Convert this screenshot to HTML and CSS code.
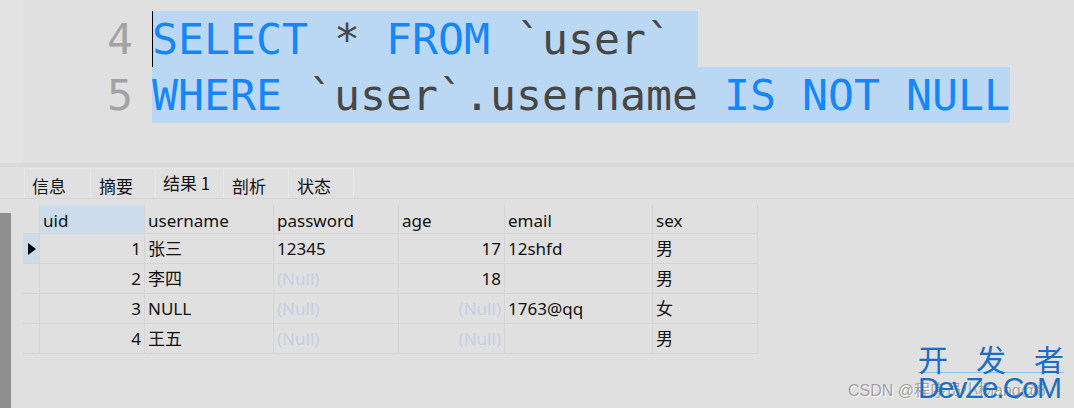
FILE: index.html
```html
<!DOCTYPE html>
<html lang="zh-CN">
<head>
    <meta charset="UTF-8">
    <title>查询</title>
    <link rel="stylesheet" href="styles.css">
</head>
<body>

<div class="editor">
    <div class="line">
        <span class="ln">4</span>
        <span class="code sel cursor"><span class="kw">SELECT</span> * <span class="kw">FROM</span> `user` </span>
    </div>
    <div class="line">
        <span class="ln">5</span>
        <span class="code sel"><span class="kw">WHERE</span> `user`.username <span class="kw">IS NOT NULL</span></span>
    </div>
</div>

<div class="split"></div>

<div class="tabs">
    <div class="tab">信息</div>
    <div class="tab">摘要</div>
    <div class="tab active">结果 1</div>
    <div class="tab">剖析</div>
    <div class="tab">状态</div>
</div>

<div class="results">
    <div class="scrollbar"></div>
    <div class="grid">
        <div class="row head">
            <div class="ind"></div>
            <div class="c uid picked">uid</div>
            <div class="c name">username</div>
            <div class="c pwd">password</div>
            <div class="c age">age</div>
            <div class="c mail">email</div>
            <div class="c sex">sex</div>
        </div>
        <div class="row">
            <div class="ind current"><span class="arrow"></span></div>
            <div class="c uid num">1</div>
            <div class="c name">张三</div>
            <div class="c pwd">12345</div>
            <div class="c age num">17</div>
            <div class="c mail">12shfd</div>
            <div class="c sex">男</div>
        </div>
        <div class="row">
            <div class="ind"></div>
            <div class="c uid num">2</div>
            <div class="c name">李四</div>
            <div class="c pwd null">(Null)</div>
            <div class="c age num">18</div>
            <div class="c mail"></div>
            <div class="c sex">男</div>
        </div>
        <div class="row">
            <div class="ind"></div>
            <div class="c uid num">3</div>
            <div class="c name">NULL</div>
            <div class="c pwd null">(Null)</div>
            <div class="c age num null">(Null)</div>
            <div class="c mail">1763@qq</div>
            <div class="c sex">女</div>
        </div>
        <div class="row">
            <div class="ind"></div>
            <div class="c uid num">4</div>
            <div class="c name">王五</div>
            <div class="c pwd null">(Null)</div>
            <div class="c age num null">(Null)</div>
            <div class="c mail"></div>
            <div class="c sex">男</div>
        </div>
    </div>
</div>

<!-- watermark -->
<div class="mark">
    <span class="csdn">CSDN @程序员小杨ang@8</span>
    <div class="dev">
        <div class="dev-cn">开<span class="gap"></span>发<span class="gap"></span>者</div>
        <div class="dev-en">DevZe.CoM</div>
    </div>
</div>

</body>
</html>
```

FILE: styles.css
```css
body {
    margin: 0;
    padding: 0;
    width: 1074px;
    height: 408px;
    overflow: hidden;
    background-color: #e0e0e0;
    font-family: "Noto Sans", "Noto Sans CJK SC", sans-serif;
    color: #111;
    position: relative;
}
.editor {
    height: 152px;
    padding-top: 11px;
    font-family: "DejaVu Sans Mono", monospace;
    font-size: 43.2px;
    background: linear-gradient(to right, #e3e3e3 22px, #e0e0e0 22px);
}
.line {
    display: flex;
    height: 56px;
    line-height: 56px;
}
.ln {
    width: 133px;
    margin-right: 19px;
    text-align: right;
    color: #a3a3a3;
}
.code {
    white-space: pre;
    color: #474747;
}
.sel {
    background-color: #bad8f3;
}
.cursor {
    box-shadow: inset 1px 0 0 #000;
}
.kw {
    color: #1586fb;
}
.split {
    height: 4px;
    background-color: #d9d9d9;
}
.tabs {
    display: flex;
    height: 30px;
    margin-top: 1px;
    padding-left: 24px;
    border-bottom: 1px solid #d6d6d6;
    font-family: "Noto Sans CJK SC", sans-serif;
    font-size: 17px;
}
.tab {
    width: 56px;
    padding-left: 8px;
    line-height: 33px;
    border-right: 1px solid #e8e8e8;
    border-top: 1px solid #e6e6e6;
}
    .tab:first-child {
        border-left: 1px solid #e8e8e8;
        width: 58px;
        padding-left: 7px;
    }
    .tab.active {
        width: 60px;
        padding-left: 7px;
        line-height: 27px;
    }
.results {
    display: flex;
    padding-top: 6px;
    height: 203px;
}
.scrollbar {
    width: 11px;
    margin-top: 8px;
    background-color: #8f8f8f;
    margin-right: 12px;
}
.grid {
    display: flex;
    flex-direction: column;
    align-self: flex-start;
}
.row {
    display: flex;
    height: 29px;
    border-bottom: 1px solid #d5d5d5;
}
.row.head {
    height: 28px;
}
.ind {
    width: 16px;
    position: relative;
    border-right: 1px solid #d5d5d5;
}
.ind.current {
    background-color: #cddcea;
}
.arrow {
    position: absolute;
    left: 5px;
    top: 9px;
    border-left: 8px solid #000;
    border-top: 6px solid transparent;
    border-bottom: 6px solid transparent;
}
.c {
    box-sizing: border-box;
    padding: 0 3px 0 3px;
    font-size: 17px;
    line-height: 29px;
    border-right: 1px solid #d5d5d5;
    white-space: nowrap;
}
.head .c {
    line-height: 32px;
}
.c.picked {
    background-color: #cddcea;
}
.c.num {
    text-align: right;
}
.c.null {
    color: #c6cfe5;
}
.uid { width: 105px; }
.name { width: 129px; }
.pwd { width: 125px; }
.age { width: 106px; }
.mail { width: 148px; }
.sex { width: 105px; }

.mark {
    position: absolute;
    right: 0;
    bottom: 0;
    width: 240px;
    height: 70px;
}
.csdn {
    position: absolute;
    left: 14px;
    bottom: 7px;
    font-family: "Liberation Sans", "Noto Sans CJK SC", sans-serif;
    font-size: 16px;
    color: #a0a0a0;
    text-shadow: 1px 1px 0 #fff;
    white-space: nowrap;
}
.dev {
    position: absolute;
    left: 84px;
    bottom: 5px;
    width: 146px;
    color: #1a6fc4;
}
.dev-cn {
    display: flex;
    font-family: "Noto Sans CJK SC", sans-serif;
    font-size: 30px;
    line-height: 28px;
    border-bottom: 1px solid #8ec0ea;
    white-space: nowrap;
}
.gap {
    width: 28px;
}
.dev-en {
    font-family: "Liberation Sans", sans-serif;
    font-size: 30px;
    line-height: 30px;
    letter-spacing: -2px;
}
```
